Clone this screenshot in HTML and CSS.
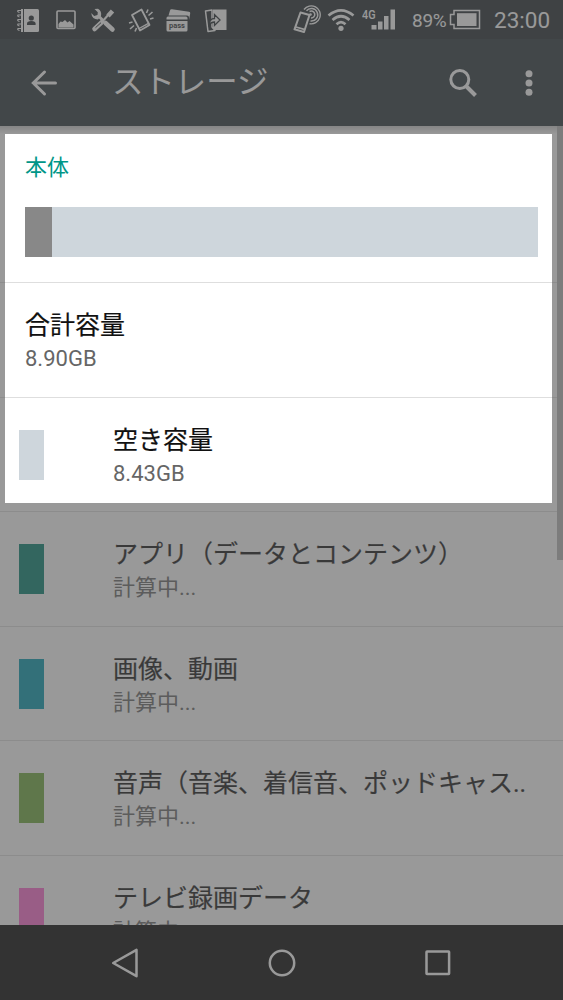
FILE: index.html
```html
<!DOCTYPE html>
<html lang="ja">
<head>
<meta charset="utf-8">
<title>ストレージ</title>
<link rel="stylesheet" href="styles.css">
</head>
<body>
<div class="screen">
  <header class="status">
    <div class="notices">
      <svg class="notice" viewBox="0 0 26 26"><path fill="#fff" d="M6 2h16.500q1.500 0 1.500 1.500v20q0 1.500-1.500 1.500H6z"/><path stroke="#1e272c" stroke-width="1" d="M8.500 2v23"/><g fill="none" stroke="#fff" stroke-width="1.200"><path d="M6 3.500H3q-1 1.500 1.500 2M6 8H3q-1 1.500 1.500 2M6 12.500H3q-1 1.500 1.500 2M6 17H3q-1 1.500 1.500 2M6 21.500H3q-1 1.500 1.500 2"/></g><g fill="#1e272c"><circle cx="16.300" cy="11" r="2.600"/><path d="M12 18v-1.500q0-2.500 4.300-2.500t4.300 2.500V18z"/></g></svg>
      <svg class="notice" viewBox="0 0 26 26"><rect x="4" y="4" width="18" height="17.500" rx="1" fill="none" stroke="#fff" stroke-width="1.600"/><path fill="#fff" d="M5.500 20.500V17l2-2.500 2 .5 2.500-2 2.500 2.500 2-1.500 4 3.500v3z"/></svg>
      <svg class="notice" viewBox="0 0 26 26"><g fill="none" stroke="#fff"><path stroke-width="3" d="M8 8.500l5 5"/><path stroke-width="4.500" stroke-linecap="round" d="M15.500 16l7 6.500"/><path stroke-width="4.500" stroke-linecap="round" d="M4.500 22l7.500-7"/><path stroke-width="2" d="M12 15l7-8"/><path stroke-width="4.500" d="M18 9l4.500-5"/></g><path fill="#fff" d="M4.500 2l3.500-.2Q12 4 11 9L8 12.500Q2 12.500 1.200 6l3 3L7.500 8l.3-2.800z"/><path stroke="#1e272c" stroke-width="1" d="M5.500 20.700l5.500-5"/></svg>
      <svg class="notice" viewBox="0 0 26 26"><path fill="none" stroke="#fff" stroke-width="1.800" stroke-linejoin="round" d="M4 8l9.500-5.500L21.500 18 12 23.500z"/><path stroke="#fff" stroke-width="1.400" d="M11 21.500l9.500-5.200"/><path stroke="#fff" stroke-width="1.600" d="M18.500 6l1.500-3.500M20.500 8.500l4-3.500M22 12l3.500-1M1 16l3.500-1M2 22l4-3.500M7 24.500l1.500-3.500"/></svg>
      <svg class="notice" viewBox="0 0 26 26"><path fill="#fff" d="M1.500 14h21v9q0 1.500-1.500 1.500H3Q1.500 24.500 1.500 23zM1.500 12.500V11q0-1.500 1.500-1.500h18q1.500 0 1.500 1.500v1.500zM3.500 8.500L5 3.500Q5.300 2 7 2.300l17 2.500q1.500.3 1.200 1.700L24 13v-2.500q0-2-2-2z"/><text class="pass" x="12" y="21" text-anchor="middle">pass</text></svg>
      <svg class="notice" viewBox="0 0 26 26"><path fill="#fff" d="M10 2.500h13.500V23H10z"/><path fill="#1e272c" stroke="#fff" stroke-width="1.500" stroke-linejoin="round" d="M2.500 4L9 3v17l3 3.500-7 1z"/><path fill="#fff" stroke="#1e272c" stroke-width="1.300" d="M6 18q.5-6.500 5.500-6.500V7.500l5.500 5.500-5.500 5.500v-3.500q-3.500 0-5.500 3z"/></svg>
    </div>
    <div class="signals">
      <svg class="cast" viewBox="0 0 30 28"><g fill="none" stroke="#fff" stroke-width="1.500"><path stroke-width="2" stroke-linejoin="round" d="M8.500 7.500L17.500 10 12 27 2.500 24.300z"/><path stroke-width="1.800" d="M4 22l9 2.600"/><path d="M17.500 6.500A3.500 3.500 0 1 1 19 13"/><path d="M14.500 5.800A6.300 6.300 0 1 1 18.500 16"/><path d="M12 4.500A9 9 0 1 1 17.500 18.700" stroke-width="1.400"/></g><circle cx="18.500" cy="9.500" r="1.300" fill="#fff"/></svg>
      <svg class="wifi" viewBox="0 0 28 24"><g fill="none" stroke="#fff" stroke-width="2.700"><path d="M1.500 7.500Q14-2.800 26.500 7.500"/><path d="M5.500 12Q14 4.500 22.500 12"/><path d="M9.500 16.200Q14 12 18.500 16.200"/></g><circle cx="14" cy="20.300" r="2.600" fill="#fff"/></svg>
      <svg class="bars" viewBox="0 0 34 26"><text class="network" x="0" y="11.500" textLength="13.500" lengthAdjust="spacingAndGlyphs">4G</text><path fill="#fff" d="M9.500 18h5v4.500h-5zM16 14.500h4.500v8H16zM22 9h4.500v13.500H22zM28.500 2.500H33v20h-4.500z"/></svg>
      <span class="percent">89%</span>
      <svg class="battery" viewBox="0 0 32 22"><path fill="none" stroke="#fff" stroke-width="1.500" d="M5 1.500h25.500v18H5v-4H1.500v-10H5z"/><path fill="#fff" d="M8 4.200h19.500v12.800H8z"/></svg>
      <span class="clock">23:00</span>
    </div>
  </header>

  <div class="appbar">
    <svg class="back" viewBox="0 0 28 28"><path fill="none" stroke="#fff" stroke-width="3" stroke-linecap="round" d="M14.500 3L3.300 14l11.200 11M3.500 14H25.500"/></svg>
    <h1 class="title">ストレージ</h1>
    <svg class="search" viewBox="0 0 30 30"><circle cx="11.800" cy="11.500" r="9" fill="none" stroke="#fff" stroke-width="3"/><path stroke="#fff" stroke-width="4" d="M18 18l9.500 9.500"/></svg>
    <svg class="more" viewBox="0 0 8 28"><g fill="#fff"><circle cx="4" cy="4.700" r="3.500"/><circle cx="4" cy="14" r="3.500"/><circle cx="4" cy="23.300" r="3.500"/></g></svg>
  </div>

  <main class="content">
    <section class="usage">
      <h2 class="section">本体</h2>
      <div class="meter"><div class="used"></div></div>
    </section>
    <section class="row total">
      <div><p class="name">合計容量</p><p class="value">8.90GB</p></div>
    </section>
    <section class="row">
      <i class="swatch free"></i>
      <div><p class="name">空き容量</p><p class="value">8.43GB</p></div>
    </section>
    <section class="row">
      <i class="swatch apps"></i>
      <div><p class="name">アプリ（データとコンテンツ）</p><p class="value">計算中...</p></div>
    </section>
    <section class="row">
      <i class="swatch images"></i>
      <div><p class="name">画像、動画</p><p class="value">計算中...</p></div>
    </section>
    <section class="row">
      <i class="swatch audio"></i>
      <div><p class="name">音声（音楽、着信音、ポッドキャス..</p><p class="value">計算中...</p></div>
    </section>
    <section class="row">
      <i class="swatch tv"></i>
      <div><p class="name">テレビ録画データ</p><p class="value">計算中...</p></div>
    </section>
    <div class="scrollbar"></div>
  </main>

  <nav class="nav">
    <svg class="key" viewBox="0 0 32 32"><path fill="none" stroke="#fff" stroke-width="2.500" stroke-linejoin="round" d="M27.500 2.800v26.400L4.200 16z"/></svg>
    <svg class="key" viewBox="0 0 32 32"><circle cx="16" cy="16" r="12.200" fill="none" stroke="#fff" stroke-width="2.500"/></svg>
    <svg class="key" viewBox="0 0 32 32"><rect x="4.500" y="4.500" width="22.600" height="22.600" rx=".5" fill="none" stroke="#fff" stroke-width="2.500"/></svg>
  </nav>
  <div class="spotlight"></div>
</div>
</body>
</html>
```
FILE: styles.css
```css
* { box-sizing: border-box; }
body {
  margin: 0;
  font-family: Roboto, "Noto Sans CJK JP", sans-serif;
}
h1, h2, p { margin: 0; font-weight: 400; }
svg { display: block; flex: none; }

.screen {
  position: relative;
  display: flex;
  flex-direction: column;
  width: 563px;
  height: 1000px;
  overflow: hidden;
  background: #fff;
}

/* Status bar */
.status {
  display: flex;
  justify-content: space-between;
  height: 39px;
  flex: none;
  padding: 0 13px 0 15px;
  background: #1e272c;
  color: #fff;
}
.notices { display: flex; align-items: center; gap: 11.500px; }
.notice { width: 26px; height: 26px; }
.pass { font-size: 7.500px; font-weight: 700; fill: #1e272c; }
.signals { display: flex; align-items: center; white-space: nowrap; }
.cast { width: 30px; height: 28px; margin-bottom: 1px; }
.wifi { width: 28px; height: 24px; margin-left: 5px; }
.bars { width: 34px; height: 26px; margin-left: 7px; }
.network { font-size: 13.500px; font-weight: 500; fill: #fff; }
.percent { width: 37px; margin-left: 16px; font-size: 19px; line-height: 39px; padding-top: 2px; letter-spacing: -0.300px; }
.battery { width: 32px; height: 22px; }
.clock { width: 56px; margin-left: 13px; font-size: 22.500px; line-height: 39px; padding-top: 2px; }

/* App bar */
.appbar {
  display: flex;
  align-items: center;
  height: 87px;
  flex: none;
  padding: 0 30px;
  background: #263238;
  color: #fff;
}
.back { width: 28px; height: 28px; }
.title { flex: 1; margin-left: 54px; font-size: 31.400px; line-height: 40px; }
.search { width: 30px; height: 30px; }
.more { width: 8px; height: 28px; margin-left: 47px; }

/* Storage list */
.content {
  position: relative;
  flex: 1;
  min-height: 0;
  overflow: hidden;
  background: linear-gradient(#cfcfcf, #fff 8px);
}
.usage {
  height: 157px;
  padding: 26px 25px 0;
  border-bottom: 1px solid #dedede;
}
.section {
  height: 32px;
  color: #009688;
  font-size: 22px;
  line-height: 32px;
  font-weight: 400;
}
.meter { height: 50px; margin-top: 23px; background: #ced6dc; }
.used { width: 27px; height: 50px; background: #888; }
.row {
  display: flex;
  height: 114.600px;
  padding: 28px 0 0 19px;
  border-bottom: 1px solid #dedede;
  white-space: nowrap;
}
.total { padding-left: 25px; }
.swatch { width: 25px; height: 50px; margin: 4px 69px 0 0; flex: none; }
.free { background: #ced6dc; }
.apps { background: #027f6e; }
.images { background: #0298af; }
.audio { background: #6eaa3c; }
.tv { background: #ff69cf; }
.name { height: 33px; color: #111; font-size: 25px; line-height: 30px; -webkit-text-stroke: 0.200px #111; }
.value { color: #666; font-size: 22px; line-height: 30px; }
.scrollbar {
  position: absolute;
  top: 0;
  right: 0;
  width: 6px;
  height: 434px;
  background: #b6b6b6;
}

/* Navigation keys */
.nav {
  display: flex;
  justify-content: center;
  gap: 124.500px;
  height: 75px;
  flex: none;
  padding-top: 22px;
  background: #000;
}
.key { width: 32px; height: 32px; }

/* Dims everything outside the highlighted panel */
.spotlight {
  position: absolute;
  left: 5px;
  top: 134px;
  width: 547px;
  height: 369px;
  box-shadow: 0 0 0 1000px rgba(85, 85, 85, 0.6);
}
```
